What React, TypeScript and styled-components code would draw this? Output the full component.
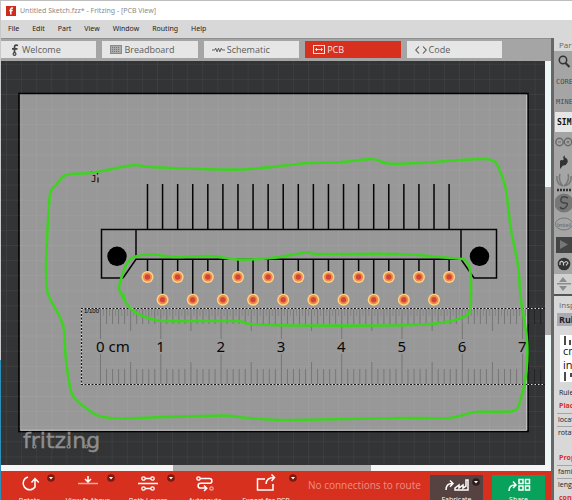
import React from 'react';
import styled, { createGlobalStyle, css } from 'styled-components';

const GlobalStyle = createGlobalStyle`
  * { box-sizing: border-box; }
  body { margin: 0; overflow: hidden; background: #bdbdbd; }
  button, input { font-family: inherit; margin: 0; padding: 0; border: 0; background: none; color: inherit; }
  svg { display: block; flex: none; }
`;

const Desktop = styled.div`
  display: grid;
  grid-template-columns: 1px minmax(0, 1fr);
  height: 100vh;
  padding-top: 1px;
  font-family: 'Open Sans', 'Noto Sans', sans-serif;
  overflow: hidden;
`;

const DesktopEdge = styled.div`
  background: linear-gradient(#c9c9c9 72%, #2d8fba 72%);
`;

const Window = styled.div`
  display: flex;
  flex-direction: column;
  min-height: 0;
  min-width: 0;
  background: #d8d8d8;
`;

const TitleBar = styled.header`
  display: flex;
  align-items: center;
  gap: 4px;
  flex: none;
  height: 19px;
  padding-left: 5px;
  background: #fff;
  color: #8b8b8b;
  font: 400 7px 'Noto Sans', sans-serif;
  white-space: nowrap;
`;

const MenuBar = styled.nav`
  display: flex;
  align-items: center;
  gap: 13px;
  flex: none;
  height: 18px;
  padding-left: 7px;
  background: #d8d8d8;
`;

const MenuItem = styled.button`
  font: 400 7px 'Noto Sans', sans-serif;
  line-height: 12px;
  color: #222;
`;

const Body = styled.div`
  display: grid;
  grid-template-columns: minmax(0, 1fr) 3px 18px;
  flex: 1;
  min-height: 0;
`;

const Main = styled.main`
  display: flex;
  flex-direction: column;
  min-width: 0;
  min-height: 0;
`;

const Splitter = styled.div`
  background: #676767;
`;

const TabBar = styled.div`
  flex: none;
  height: 23px;
  padding: 2px 49px 3px 0;
  background: #a5a5a5;
  border-top: 1px solid #8f8f8f;
  display: grid;
  grid-template-columns: repeat(5, minmax(0, 1fr));
  gap: 6px;
`;

const Tab = styled.button<{ $active?: boolean }>`
  display: flex;
  align-items: center;
  gap: 2px;
  height: 17px;
  padding-left: 8px;
  background: ${(p) => (p.$active ? '#d7301f' : '#e6e6e6')};
  color: ${(p) => (p.$active ? '#fbe3df' : '#5c5c5c')};
  font-size: 9px;
  line-height: 16px;
  overflow: hidden;
`;

const Workspace = styled.div`
  flex: 1;
  min-height: 0;
  display: grid;
  grid-template-columns: minmax(0, 1fr) 6px;
`;

const Canvas = styled.svg`
  width: 100%;
  height: 100%;
  min-height: 0;
  background: #333435;
`;

const VerticalTrack = styled.div`
  display: grid;
  grid-template-rows: 126fr 148fr 130fr;
  background: #eef6f7;
`;

const HorizontalTrack = styled.div`
  flex: none;
  display: grid;
  grid-template-columns: 172fr 198fr 180fr;
  height: 6px;
  background: #f5f5f5;
`;

const Thumb = styled.div<{ $vertical?: boolean }>`
  background: #aaa;
  ${(p) => (p.$vertical ? css`grid-row: 2;` : css`grid-column: 2;`)}
`;

const Toolbar = styled.footer`
  flex: none;
  display: flex;
  height: 29px;
  padding-right: 6px;
  background: #d7301f;
  color: #fff;
  overflow: hidden;
`;

const Tools = styled.div`
  display: flex;
  flex: none;
`;

const ToolButton = styled.button<{ $width: number }>`
  display: grid;
  grid-template-rows: 24px 12px;
  justify-items: center;
  align-items: center;
  position: relative;
  width: ${(p) => p.$width}px;
  height: 36px;
  font-size: 7px;
  line-height: 12px;
  white-space: nowrap;
`;

const DropMark = styled.svg`
  position: absolute;
  top: 3px;
  right: 3px;
`;

const Status = styled.div`
  flex: 1;
  min-width: 0;
  padding: 6px 0 0 8px;
  color: #ee8f83;
  font-size: 10px;
  line-height: 16px;
  white-space: nowrap;
`;

const Actions = styled.div`
  display: flex;
  gap: 9px;
  padding-top: 4px;
`;

const ActionButton = styled.button<{ $tone: string }>`
  display: grid;
  grid-template-rows: 19px 12px;
  justify-items: center;
  align-items: center;
  position: relative;
  width: 53px;
  height: 32px;
  background: ${(p) => p.$tone};
  color: #fff;
  font-size: 7px;
  line-height: 12px;
`;

const SidePanel = styled.aside`
  min-width: 0;
  overflow: hidden;
  background: #d8d8d8;
  color: #222;
  white-space: nowrap;
`;

const PanelTitle = styled.div`
  height: 13px;
  padding-left: 5px;
  color: #666;
  font-size: 8px;
  line-height: 14px;
`;

const Bins = styled.div`
  background: #a5a5a5;
  padding: 1px 0 0 1px;
`;

const Bin = styled.button<{ $selected?: boolean }>`
  display: flex;
  align-items: center;
  width: 100%;
  height: 20px;
  padding-left: ${(p) => (p.$selected ? 2 : 1)}px;
  background: ${(p) => (p.$selected ? '#e6e6e6' : 'transparent')};
  color: ${(p) => (p.$selected ? '#111' : '#4c4c4c')};
  font: ${(p) => (p.$selected ? '700 8px' : '400 7px')} 'DejaVu Sans Mono', monospace;
`;

const BinIcon = styled(Bin)<{ $tall?: boolean }>`
  height: ${(p) => (p.$tall ? 22 : 20)}px;
  padding-left: 0;
`;

const BinScroll = styled.div`
  height: 20px;
  padding: 2px 0 0 3px;
  background: #d0d0d0;
`;

const Inspector = styled.section`
  border-top: 2px solid #555;
  padding-left: 3px;
  font-size: 7px;
`;

const InspectorTitle = styled.div`
  padding-left: 2px;
  color: #666;
  font-size: 8px;
  line-height: 17px;
`;

const PartName = styled.div`
  height: 13px;
  padding-left: 2px;
  background: #abaab4;
  font-size: 9px;
  font-weight: 700;
  line-height: 13px;
`;

const Preview = styled.svg`
  margin: 9px 0 0 3px;
  background: #fff;
`;

const PartKind = styled.div`
  padding: 4px 0 0 2px;
  line-height: 13px;
`;

const Group = styled.div<{ $spaced?: boolean }>`
  margin-top: ${(p) => (p.$spaced ? 12 : 0)}px;
  padding-left: 2px;
  color: #d7301f;
  font-weight: 700;
  line-height: 14px;
`;

const Property = styled.div`
  height: 13px;
  padding-left: 1px;
  border-top: 1px solid #a5a5a5;
  line-height: 12px;
`;

type Point = [number, number];

const smooth = (pts: Point[]) => {
  const n = pts.length;
  const at = (i: number) => pts[(i + n) % n];
  let d = `M${pts[0][0]} ${pts[0][1]}`;
  for (let i = 0; i < n; i++) {
    const [a, b, c, e] = [at(i - 1), at(i), at(i + 1), at(i + 2)];
    const k = 7;
    d += `C${b[0] + (c[0] - a[0]) / k} ${b[1] + (c[1] - a[1]) / k} ${c[0] - (e[0] - b[0]) / k} ${c[1] - (e[1] - b[1]) / k} ${c[0]} ${c[1]}`;
  }
  return d + 'Z';
};

const outerLoop: Point[] = [
  [66, 175], [90, 173], [112, 169], [134, 165], [150, 167], [200, 169], [240, 169.5], [272, 167], [308, 163],
  [338, 162.5], [372, 159], [388, 163.5], [420, 163], [460, 160], [485, 159], [495, 162], [500, 171], [506, 190], [511, 230],
  [518, 265], [521, 300], [527, 340], [526.5, 370], [521, 398], [513, 411], [475, 412], [450, 418], [400, 418],
  [320, 419.5], [280, 420], [247, 418], [225, 415.5], [165, 417], [120, 418.5], [99, 416], [86, 408], [72, 394],
  [66, 360], [64, 330], [60, 317], [48, 294], [46, 270], [47, 240], [50, 195], [56, 185],
];

const innerLoop: Point[] = [
  [134, 257], [152, 254.5], [175, 257], [210, 256], [238, 259.5], [272, 258], [306, 252.5], [320, 254], [400, 254],
  [450, 258], [465, 260], [470, 270], [471, 295], [469, 313], [455, 320], [430, 324], [390, 325.5], [290, 325.5],
  [250, 324], [235, 321], [165, 321], [145, 317], [131, 309], [123, 297], [119, 288], [122, 276], [127, 263],
];

const range = (n: number) => Array.from({ length: n }, (_, i) => i);

const Ruler = () => (
  <g>
    {range(75).map((i) => {
      const x = 100.5 + i * 6.03;
      const len = i % 10 === 0 ? 30 : i % 5 === 0 ? 22 : 15;
      return (
        <path
          key={i}
          d={`M${x} 309v${len}M${x} 384v${-len}`}
          stroke={x > 528 ? '#232323' : '#777'}
          strokeWidth="1"
        />
      );
    })}
    {range(71).map((i) => (
      <path key={i} d={`M${103.5 + i * 6.03} 309v7`} stroke="#858585" strokeWidth="1" />
    ))}
    <path d="M545 308.5H81.5v76H545" fill="none" stroke="#ddd" strokeWidth="1.2" />
    <path d="M545 308.5H81.5v76H545" fill="none" stroke="#151515" strokeWidth="1.2" strokeDasharray="2 1.5" />
    <text x="84" y="313" fontSize="6" fontFamily="Liberation Sans, sans-serif">1/100</text>
    <g fontSize="15" fontFamily="Noto Sans, sans-serif" fill="#080808">
      <text x="96" y="352">0 cm</text>
      {range(7).map((i) => (
        <text key={i} x={160.5 + i * 60.3} y="352" textAnchor="middle">{i + 1}</text>
      ))}
    </g>
  </g>
);

const Connector = () => (
  <g fill="none" stroke="#050505" strokeWidth="1.5">
    <path d="M123 278H101.500V229.500H496.500V278H474L461 259.300H136L123 278M136 229.500V256M461 229.500V259" />
    <circle cx="117" cy="256.300" r="9.700" fill="#000" stroke="none" />
    <circle cx="479.500" cy="256.300" r="9.700" fill="#000" stroke="none" />
    {range(21).map((i) => {
      const x = 147.5 + i * 15.08;
      const y = i % 2 ? 299.7 : 277;
      return (
        <g key={i}>
          <path d={`M${x} 184V229M${x} 259V${y - 6}`} />
          <circle cx={x} cy={y} r="6" fill="#fdd584" stroke="none" />
          <circle cx={x} cy={y} r="4.600" fill="#f58a4b" stroke="none" />
          <circle cx={x} cy={y} r="2.700" fill="#cc463b" stroke="none" />
        </g>
      );
    })}
  </g>
);

const BoardView = () => (
  <Canvas role="img" aria-label="PCB layout">
    <g transform="translate(-1 -61)">
      <rect x="19" y="93.500" width="509" height="338" fill="#989898" stroke="#000" strokeWidth="1.600" />
      <path d="M20.500 430.200H526.700V95" fill="none" stroke="#c6c6c6" strokeWidth="1" />
      <g stroke="#fff" strokeOpacity=".05" strokeWidth="1">
        {range(36).map((i) => <path key={i} d={`M${6.5 + i * 15.1} 61V465`} />)}
        {range(27).map((i) => <path key={i} d={`M1 ${64.3 + i * 15.1}H545`} />)}
      </g>
      <text x="91" y="182" fontSize="9" fontFamily="DejaVu Sans Mono, monospace">J</text>
      <path d="M91.500 173.500v-2M97.500 174.500v-3M98 177.500v5" stroke="#111" strokeWidth="1.200" />
      <Ruler />
      <Connector />
      <g fill="none" stroke="#3ed321" strokeWidth="2.600" strokeLinejoin="round">
        <path d={smooth(outerLoop)} />
        <path d={smooth(innerLoop)} />
        <path d="M122 293l2 5" strokeWidth="4" />
      </g>
      <text x="23" y="448" fontSize="22" fontFamily="DejaVu Sans, sans-serif" fill="#8e8e8e" stroke="#8e8e8e" strokeWidth=".4">fritzing</text>
      <g fill="#333435" stroke="#8e8e8e" strokeWidth="1.200">
        <circle cx="34.500" cy="446.500" r="1.500" />
        <circle cx="68.500" cy="446.500" r="1.500" />
        <circle cx="86.500" cy="446.500" r="1.500" />
      </g>
    </g>
  </Canvas>
);

const AppLogo = () => (
  <svg width="10" height="10" viewBox="0 0 10 10">
    <rect width="10" height="10" fill="#cf2a1b" />
    <path d="M7 2.200Q4.800 1.500 4.800 3.500V8.500M3.300 4.500H6.700" fill="none" stroke="#fff" strokeWidth="1.500" />
  </svg>
);

const WelcomeIcon = () => (
  <svg width="11" height="14" viewBox="0 0 11 14" fill="none" stroke="#444" strokeWidth="1.700">
    <path d="M9 2.500Q5.500 1 5.500 4.500V10M3 5.800H8.500" />
    <circle cx="5.500" cy="11" r="1.400" strokeWidth="1.200" />
  </svg>
);

const BreadboardIcon = () => (
  <svg width="12" height="9" viewBox="0 0 12 9">
    <rect x=".5" y=".5" width="11" height="8" fill="#aaa" stroke="#8a8a8a" />
    <path d="M2 2.500h8M2 4.500h8M2 6.500h8" stroke="#777" strokeDasharray="1 1" />
  </svg>
);

const SchematicIcon = () => (
  <svg width="13" height="8" viewBox="0 0 14 8" fill="none" stroke="#555">
    <path d="M0 4h3l1-2 1.500 4L7 2l1.500 4L10 2l1 2h3" />
  </svg>
);

const PcbIcon = () => (
  <svg width="12" height="9" viewBox="0 0 12 9" fill="none" stroke="#fbe3df">
    <rect x=".5" y=".5" width="11" height="8" />
    <path d="M2.500 4.500h7M4 3L2.500 4.500 4 6M8 3l1.500 1.500L8 6" />
  </svg>
);

const CodeIcon = () => (
  <svg width="12" height="10" viewBox="0 0 12 10" fill="none" stroke="#555" strokeWidth="1.100">
    <path d="M4 1.500L.8 5 4 8.500M8 1.500L11.200 5 8 8.500" />
  </svg>
);

const toolIcon = { width: 26, height: 20, viewBox: '0 0 26 20', fill: 'none', stroke: '#fff', strokeWidth: 1.5 };

const RotateIcon = () => (
  <svg {...toolIcon}>
    <path d="M11 4A6.500 6.500 0 1 0 18 14V6M14.500 9.500L18 5.500l3.800 4" />
  </svg>
);
const ViewIcon = () => (
  <svg {...toolIcon}>
    <path d="M3 10.500h20" stroke="#f6a59a" />
    <path d="M13 3v6M10 6l3 3 3-3" />
  </svg>
);
const LayersIcon = () => (
  <svg {...toolIcon}>
    <path d="M3 10.500h20M9 5.500h8M9 15.500h8" />
    <g fill="#d7301f" strokeWidth="1.300">
      <circle cx="8.500" cy="5.500" r="1.700" /><circle cx="17.500" cy="5.500" r="1.700" />
      <circle cx="8.500" cy="15.500" r="1.700" /><circle cx="17.500" cy="15.500" r="1.700" />
    </g>
  </svg>
);
const RouteIcon = () => (
  <svg {...toolIcon}>
    <path d="M8 5.500h9.500a2.400 2.400 0 0 1 0 4.800H8.500a2.400 2.400 0 0 0 0 4.800H14M12 12.500l2.800 2.700L12 18" />
    <circle cx="6.500" cy="5.500" r="1.700" fill="#d7301f" strokeWidth="1.300" />
    <circle cx="19.500" cy="15.500" r="1.700" strokeWidth="1.200" stroke="#f6a59a" />
  </svg>
);
const ExportIcon = () => (
  <svg {...toolIcon}>
    <path d="M12 6H4.500V17H20V11M13 11Q13.500 4.500 21 4.500M18.500 1.500l3 3-3 3.500" />
  </svg>
);
const FabricateIcon = () => (
  <svg width="26" height="14" viewBox="0 0 26 14" fill="none" stroke="#fff" strokeWidth="1.500">
    <path d="M2 12Q2 5.500 8 5.500M6 2.500l3 3-3 3.200M11 12V10l4-3v3l4-3v3l3-2V2h2v10H11z" />
  </svg>
);
const ShareIcon = () => (
  <svg width="26" height="14" viewBox="0 0 26 14" fill="none" stroke="#fff" strokeWidth="1.500">
    <path d="M3 13Q3 7 9 7M7 3.500l3 3.500-3 3" />
    <path d="M13 1.500h4v4h-4zM19.500 1.500h4v4h-4zM13 8h4v4h-4zM19.500 8h4v4h-4z" />
  </svg>
);

const Drop = ({ tone = '#79190f' }: { tone?: string }) => (
  <DropMark width="8" height="8" viewBox="0 0 8 8">
    <circle cx="4" cy="4" r="3.800" fill={tone} />
    <path d="M2 3h4L4 5.600z" fill="#fff" />
  </DropMark>
);

const SearchIcon = () => (
  <svg width="17" height="16" viewBox="0 0 17 16" fill="none" stroke="#333">
    <circle cx="8" cy="6" r="3.700" strokeWidth="1.500" />
    <path d="M10.500 9l4 4" strokeWidth="2.200" />
  </svg>
);
const ArduinoIcon = () => (
  <svg width="17" height="18" viewBox="0 0 17 18" fill="none" stroke="#686868" strokeWidth="1.400">
    <circle cx="4.500" cy="9" r="3.700" /><circle cx="13" cy="9" r="3.700" />
    <path d="M3 9h3M11.500 9h3M13 7.500v3" strokeWidth="1" />
  </svg>
);
const SparkIcon = () => (
  <svg width="17" height="18" viewBox="0 0 17 18" fill="#333">
    <path d="M5 16V8.500Q5 6.500 7 7Q9 8 8.500 5.500Q7.500 3 10 2.500Q9 4.500 11 5Q13.500 7 12.500 9.500Q11 13 8 12.500z" />
  </svg>
);
const SeedIcon = () => (
  <svg width="17" height="20" viewBox="0 0 17 20" fill="none" stroke="#777" strokeWidth="1.500">
    <path d="M2 4Q1 12 8 14M5 2Q3 9 8 14M13 2Q15 9 9 14M16 4Q17 12 9 14" />
    <path d="M2 18h15" stroke="#333" strokeWidth="2.500" strokeDasharray="2 1" />
  </svg>
);
const SnootIcon = () => (
  <svg width="17" height="21" viewBox="0 0 17 21">
    <circle cx="9" cy="10" r="9.500" fill="#777" />
    <path d="M13 5Q7 2 6 6T10 10T10 15Q7 17 5 14" fill="none" stroke="#444" strokeWidth="1.400" />
  </svg>
);
const IntelIcon = () => (
  <svg width="17" height="14" viewBox="0 0 17 14">
    <ellipse cx="9" cy="7" rx="8.500" ry="6" fill="none" stroke="#777" />
    <text x="2" y="10" fontSize="6" fontWeight="700" fontFamily="Noto Sans, sans-serif" fill="#777">intel</text>
  </svg>
);
const PlayIcon = () => (
  <svg width="17" height="17" viewBox="0 0 17 17">
    <rect x="1" y="1" width="16" height="16" fill="#444" />
    <path d="M5 4l8 4.500L5 13z" fill="#777" />
  </svg>
);
const ContribIcon = () => (
  <svg width="17" height="18" viewBox="0 0 17 18">
    <circle cx="9" cy="9" r="6.300" fill="#333" />
    <path d="M5 10V7.500Q7 5 8.500 8V10.500M9.500 8Q11 5 13 8L11 10.500" fill="none" stroke="#ccc" strokeWidth="1.200" />
  </svg>
);

const menus = ['File', 'Edit', 'Part', 'View', 'Window', 'Routing', 'Help'];
const tabs = [
  { label: 'Welcome', icon: <WelcomeIcon /> },
  { label: 'Breadboard', icon: <BreadboardIcon /> },
  { label: 'Schematic', icon: <SchematicIcon /> },
  { label: 'PCB', icon: <PcbIcon />, active: true },
  { label: 'Code', icon: <CodeIcon /> },
];
const tools = [
  { label: 'Rotate', icon: <RotateIcon />, width: 57, drop: true },
  { label: 'View fr Above', icon: <ViewIcon />, width: 60, drop: true },
  { label: 'Both Layers', icon: <LayersIcon />, width: 60, drop: true },
  { label: 'Autoroute', icon: <RouteIcon />, width: 54 },
  { label: 'Export for PCB', icon: <ExportIcon />, width: 68, drop: true },
];
const binIcons = [
  { name: 'Arduino', icon: <ArduinoIcon /> },
  { name: 'SparkFun', icon: <SparkIcon /> },
  { name: 'Seeed', icon: <SeedIcon /> },
  { name: 'Snootlab', icon: <SnootIcon />, tall: true },
  { name: 'Intel', icon: <IntelIcon /> },
  { name: 'Playground', icon: <PlayIcon /> },
  { name: 'Contributed', icon: <ContribIcon /> },
];

export default function App() {
  return (
    <Desktop>
      <GlobalStyle />
      <DesktopEdge />
      <Window>
        <TitleBar><AppLogo />Untitled Sketch.fzz* - Fritzing - [PCB View]</TitleBar>
        <MenuBar>{menus.map((m) => <MenuItem key={m}>{m}</MenuItem>)}</MenuBar>
        <Body>
          <Main>
            <TabBar>
              {tabs.map((t) => <Tab key={t.label} $active={t.active}>{t.icon}{t.label}</Tab>)}
            </TabBar>
            <Workspace>
              <BoardView />
              <VerticalTrack><Thumb $vertical /></VerticalTrack>
            </Workspace>
            <HorizontalTrack><Thumb /></HorizontalTrack>
            <Toolbar>
              <Tools>
                {tools.map((t) => (
                  <ToolButton key={t.label} $width={t.width}>
                    {t.icon}
                    <span>{t.label}</span>
                    {t.drop && <Drop />}
                  </ToolButton>
                ))}
              </Tools>
              <Status>No connections to route</Status>
              <Actions>
                <ActionButton $tone="#554241"><FabricateIcon /><span>Fabricate</span><Drop tone="#2c1c1b" /></ActionButton>
                <ActionButton $tone="#09a25c"><ShareIcon /><span>Share</span></ActionButton>
              </Actions>
            </Toolbar>
          </Main>
          <Splitter />
          <SidePanel>
            <PanelTitle>Parts</PanelTitle>
            <Bins>
              <BinIcon aria-label="Search"><SearchIcon /></BinIcon>
              <Bin>CORE</Bin>
              <Bin>MINE</Bin>
              <Bin $selected>SIM</Bin>
              {binIcons.map((b) => <BinIcon key={b.name} aria-label={b.name} $tall={b.tall}>{b.icon}</BinIcon>)}
            </Bins>
            <BinScroll>
              <svg width="14" height="16" viewBox="0 0 14 16" fill="#8d8d8d">
                <path d="M2 6l4-5 4 5zM2 10l4 5 4-5zM0 7h14v1.500H0z" />
              </svg>
            </BinScroll>
            <Inspector>
              <InspectorTitle>Inspector</InspectorTitle>
              <PartName>Ruler</PartName>
              <Preview width="14" height="47" viewBox="0 0 14 47">
                <path d="M5 1v9M10 5v5M5 37v9M11 38v4" stroke="#111" strokeWidth="1.500" />
                <g fontFamily="Open Sans, sans-serif" fontSize="11" fill="#111">
                  <text x="3" y="20">cm</text>
                  <text x="3" y="34">in</text>
                </g>
              </Preview>
              <PartKind>Ruler</PartKind>
              <Group>Placement</Group>
              <Property>location</Property>
              <Property>rotation</Property>
              <Group $spaced>Properties</Group>
              <Property>family</Property>
              <Property>length</Property>
              <Group>conn.</Group>
            </Inspector>
          </SidePanel>
        </Body>
      </Window>
    </Desktop>
  );
}
